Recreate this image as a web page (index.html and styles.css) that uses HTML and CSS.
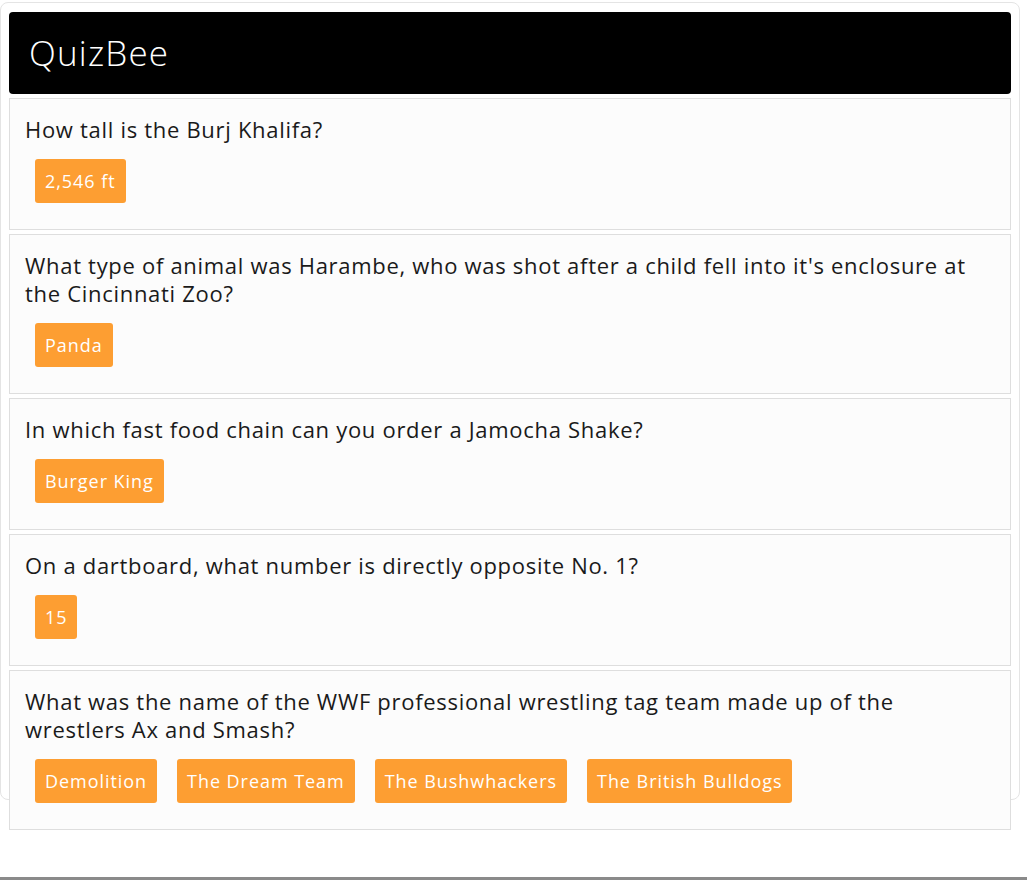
FILE: index.html
```html
<!DOCTYPE html>
<html>
<head>
<meta charset="utf-8">
<link rel="stylesheet" href="styles.css">
</head>
<body>
<div class="container">
  <div class="title">QuizBee</div>
  <div class="card">
    <div class="question">How tall is the Burj Khalifa?</div>
    <div class="answers"><button class="answer">2,546 ft</button></div>
  </div>
  <div class="card">
    <div class="question">What type of animal was Harambe, who was shot after a child fell into it's enclosure at the Cincinnati Zoo?</div>
    <div class="answers"><button class="answer">Panda</button></div>
  </div>
  <div class="card">
    <div class="question">In which fast food chain can you order a Jamocha Shake?</div>
    <div class="answers"><button class="answer">Burger King</button></div>
  </div>
  <div class="card">
    <div class="question">On a dartboard, what number is directly opposite No. 1?</div>
    <div class="answers"><button class="answer">15</button></div>
  </div>
  <div class="card">
    <div class="question">What was the name of the WWF professional wrestling tag team made up of the wrestlers Ax and Smash?</div>
    <div class="answers">
      <button class="answer">Demolition</button>
      <button class="answer">The Dream Team</button>
      <button class="answer">The Bushwhackers</button>
      <button class="answer">The British Bulldogs</button>
    </div>
  </div>
</div>
<div class="screen-edge"></div>
</body>
</html>
```
FILE: styles.css
```css
html, body {
  margin: 0;
  padding: 0;
  background: #fff;
  height: 880px;
  overflow: hidden;
  font-family: "Open Sans", Lato, sans-serif;
  color: #1a1a1a;
}
.container {
  box-sizing: border-box;
  width: 1020px;
  height: 798px;
  margin-top: 2px;
  padding: 9px 8px;
  border: 1px solid #e4e4e4;
  border-radius: 8px;
  background: #fff;
}
.title {
  height: 82px;
  background: #000;
  color: #fff;
  border-radius: 4px;
  box-sizing: border-box;
  padding: 21px 20px 0 20px;
  font-size: 35px;
  font-weight: 300;
  line-height: 40px;
  letter-spacing: 1.2px;
}
.card {
  margin-top: 4px;
  background: #fcfcfc;
  border: 1px solid #dedede;
  padding: 16px 15px 26px 15px;
}
.question {
  font-size: 22px;
  line-height: 28px;
  letter-spacing: 0.7px;
  font-weight: 500;
}
.answers {
  display: flex;
  flex-wrap: wrap;
  gap: 20px;
  margin-top: 16px;
  padding-left: 10px;
}
.answer {
  font-family: "Open Sans", Lato, sans-serif;
  height: 44px;
  background: #fd9e32;
  color: #fff;
  border: none;
  border-radius: 3px;
  padding: 0 10px;
  font-size: 18px;
  line-height: 44px;
  letter-spacing: 0.95px;
}
.screen-edge {
  position: absolute;
  left: 0;
  top: 877px;
  width: 1027px;
  height: 3px;
  background: #8a8a8a;
}
```
